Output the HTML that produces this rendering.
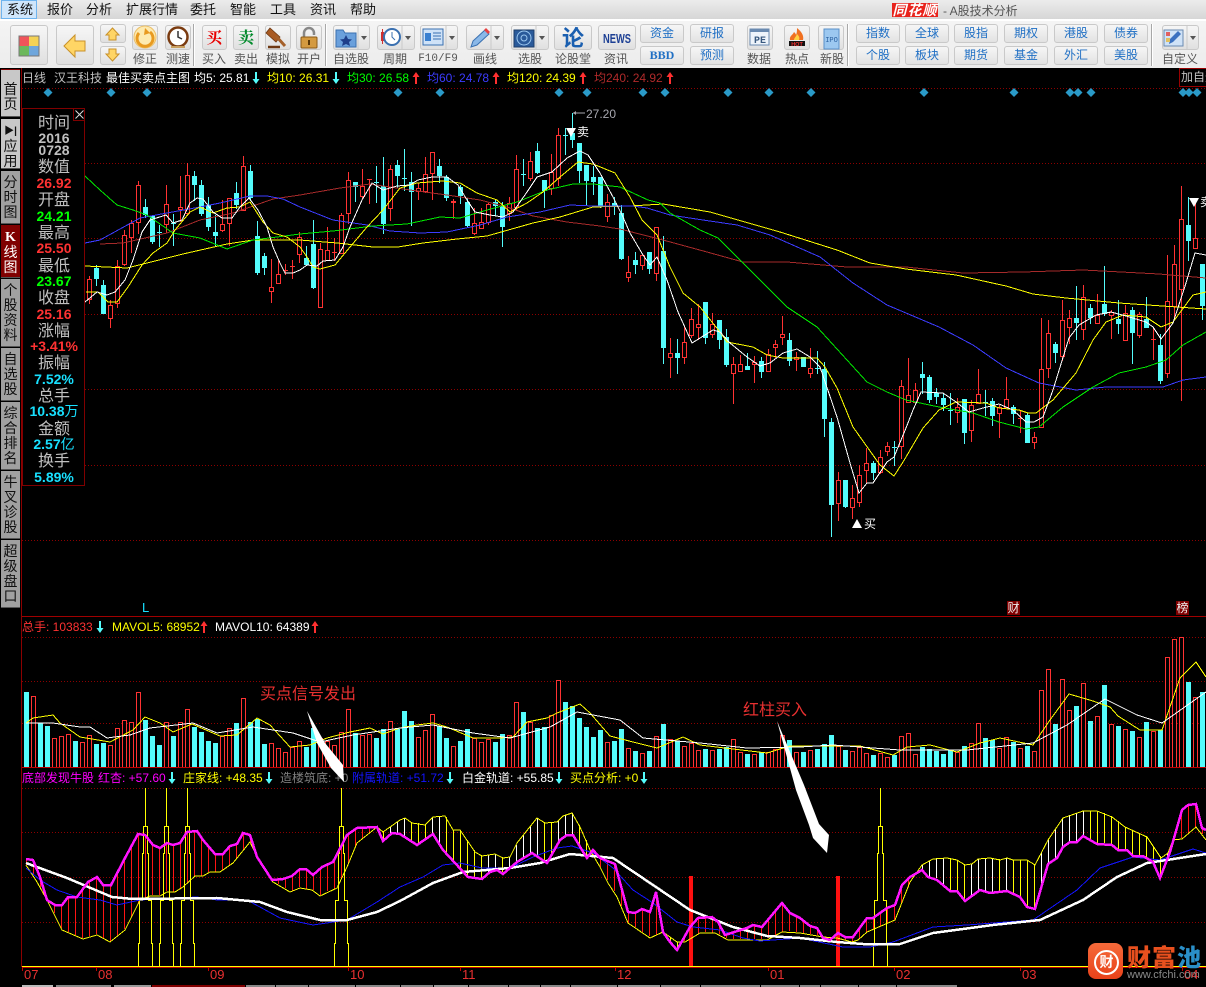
<!DOCTYPE html>
<html lang="zh"><head><meta charset="utf-8"><title>同花顺</title>
<style>
html,body{margin:0;padding:0;background:#000;}
#r{position:relative;width:1206px;height:987px;overflow:hidden;background:#000;font-family:"Liberation Sans","WenQuanYi Zen Hei","Noto Sans CJK SC",sans-serif;font-size:12px;}
#r div,#r span{position:absolute;white-space:nowrap;}
svg{position:absolute;left:0;top:0;}
#menu{left:0;top:0;width:1206px;height:19px;background:linear-gradient(#ececec,#d6d6d6);}
#line{left:0;top:19px;width:1206px;height:2px;background:#fff;}
#tb{left:0;top:21px;width:1206px;height:47px;background:linear-gradient(#f4f4f4,#ececec);}
.m{top:3px;font-size:13px;color:#111;line-height:14px;}
.b{background:linear-gradient(#f6f6f6,#e0e0e0);border:1px solid #c9c9c9;border-radius:3px;box-sizing:border-box;}
.l{top:52px;width:60px;text-align:center;color:#555;font-size:12px;line-height:14px;}
.g{width:44px;height:19px;background:linear-gradient(#f6f6f6,#e2e2e2);border:1px solid #c9c9c9;border-radius:3px;box-sizing:border-box;text-align:center;color:#1f6fc4;font-size:12px;line-height:17px;}
.s{top:24px;height:42px;width:1px;background:#a8a8a8;border-right:1px solid #fff;}
.t{line-height:14px;font-size:12px;}
.tab{left:1px;width:19px;background:#a0a0a0;color:#111;font-size:14px;line-height:15px;text-align:center;white-space:normal!important;border-bottom:1px solid #555;}
.p{left:24px;width:60px;text-align:center;line-height:16px;}
.a{font-size:16px;color:#c0c0c0;margin-top:2px;}
.n{font-size:14px;font-weight:bold;}
.d{top:968px;color:#e83030;font-size:13px;line-height:14px;}
</style></head><body><div id="r">
<svg id="chart" width="1206" height="987" shape-rendering="crispEdges"></svg>

<div id="menu"></div>
<div style="left:1px;top:0;width:36px;height:19px;background:#cfe6fb;border:1px solid #6fb4ee;box-sizing:border-box"></div>
<span class="m" style="left:7px">系统</span><span class="m" style="left:47px">报价</span><span class="m" style="left:86px">分析</span><span class="m" style="left:126px">扩展行情</span><span class="m" style="left:190px">委托</span><span class="m" style="left:230px">智能</span><span class="m" style="left:270px">工具</span><span class="m" style="left:310px">资讯</span><span class="m" style="left:350px">帮助</span>
<div style="left:892px;top:3px;width:46px;height:14px;background:#e8231c;color:#fff;font-weight:bold;font-style:italic;font-size:14px;line-height:14px;text-align:center;letter-spacing:1px">同花顺</div>
<span style="left:943px;top:4px;color:#555;font-size:12px;line-height:14px">- A股技术分析</span>
<div id="line"></div><div id="tb"></div>

<div class="b" style="left:10px;top:25px;width:38px;height:40px"></div>
<div class="b" style="left:56px;top:25px;width:38px;height:40px"></div>
<div class="b" style="left:100px;top:24px;width:26px;height:19px"></div>
<div class="b" style="left:100px;top:46px;width:26px;height:19px"></div>
<div class="b" style="left:132px;top:25px;width:26px;height:25px"></div>
<div class="b" style="left:165px;top:25px;width:26px;height:25px"></div>
<div class="s" style="left:193px"></div>
<div class="b" style="left:202px;top:25px;width:25px;height:25px"></div>
<div class="b" style="left:233px;top:25px;width:26px;height:25px"></div>
<div class="b" style="left:265px;top:25px;width:26px;height:25px"></div>
<div class="b" style="left:296px;top:25px;width:26px;height:25px"></div>
<div class="s" style="left:325px"></div>
<div class="b" style="left:333px;top:25px;width:37px;height:25px"></div>
<div class="b" style="left:377px;top:25px;width:38px;height:25px"></div>
<div class="b" style="left:420px;top:25px;width:38px;height:25px"></div>
<div class="b" style="left:466px;top:25px;width:38px;height:25px"></div>
<div class="b" style="left:511px;top:25px;width:38px;height:25px"></div>
<div class="b" style="left:554px;top:25px;width:38px;height:25px"></div>
<div class="b" style="left:598px;top:25px;width:38px;height:25px"></div>
<div class="b" style="left:747px;top:25px;width:26px;height:25px"></div>
<div class="b" style="left:784px;top:25px;width:26px;height:25px"></div>
<div class="b" style="left:818px;top:25px;width:26px;height:25px"></div>
<div class="s" style="left:847px"></div><div class="s" style="left:1151px"></div>
<div class="b" style="left:1162px;top:25px;width:37px;height:25px"></div>

<span class="l" style="left:115px">修正</span><span class="l" style="left:148px">测速</span><span class="l" style="left:184px">买入</span><span class="l" style="left:216px">卖出</span><span class="l" style="left:248px">模拟</span><span class="l" style="left:279px">开户</span><span class="l" style="left:321px">自选股</span><span class="l" style="left:365px">周期</span>
<span class="l" style="left:408px;font-family:'Liberation Mono',monospace;font-size:11px">F10/F9</span><span class="l" style="left:455px">画线</span><span class="l" style="left:500px">选股</span><span class="l" style="left:543px">论股堂</span><span class="l" style="left:586px">资讯</span><span class="l" style="left:729px">数据</span><span class="l" style="left:767px">热点</span><span class="l" style="left:802px">新股</span><span class="l" style="left:1150px">自定义</span>

<div class="g" style="left:640px;top:24px">资金</div><div class="g" style="left:640px;top:46px;font-weight:bold;font-family:'Liberation Serif',serif">BBD</div>
<div class="g" style="left:690px;top:24px">研报</div><div class="g" style="left:690px;top:46px">预测</div>
<div class="g" style="left:856px;top:24px">指数</div><div class="g" style="left:856px;top:46px">个股</div>
<div class="g" style="left:905px;top:24px">全球</div><div class="g" style="left:905px;top:46px">板块</div>
<div class="g" style="left:954px;top:24px">股指</div><div class="g" style="left:954px;top:46px">期货</div>
<div class="g" style="left:1004px;top:24px">期权</div><div class="g" style="left:1004px;top:46px">基金</div>
<div class="g" style="left:1054px;top:24px">港股</div><div class="g" style="left:1054px;top:46px">外汇</div>
<div class="g" style="left:1104px;top:24px">债券</div><div class="g" style="left:1104px;top:46px">美股</div>

<svg width="1206" height="68" style="pointer-events:none">
<rect x="19" y="36" width="10" height="10" fill="#f0545a"/><rect x="29" y="36" width="10" height="10" fill="#f4d255"/><rect x="19" y="46" width="10" height="10" fill="#6cb85c"/><rect x="29" y="46" width="10" height="10" fill="#6ea6dc"/><rect x="19" y="36" width="20" height="20" fill="none" stroke="#777"/>
<polygon points="64,46 75,35 75,41 85,41 85,51 75,51 75,57" fill="#ffd565" stroke="#c8912a"/>
<polygon points="112.5,28 119,35 116,35 116,40 109,40 109,35 106,35" fill="#ffd565" stroke="#c8912a"/>
<polygon points="112.5,61 119,54 116,54 116,49 109,49 109,54 106,54" fill="#ffd565" stroke="#c8912a"/>
<circle cx="145" cy="37" r="11" fill="#fdeab0" stroke="#ecc068"/><path d="M139 33a8 8 0 1 0 11-1" fill="none" stroke="#e89a20" stroke-width="3"/><path d="M145 28l5 5-6 2z" fill="#e89a20"/>
<circle cx="178" cy="37" r="9.5" fill="#fff" stroke="#7a3b10" stroke-width="2.5"/><path d="M178 31v6l4 2" fill="none" stroke="#333" stroke-width="1.5"/><path d="M171 47h14" stroke="#c9a060" stroke-width="2"/>
<text x="214" y="43" font-size="16" font-weight="bold" fill="#e80000" text-anchor="middle" font-family="'Noto Serif CJK SC',serif">买</text>
<text x="246" y="43" font-size="16" font-weight="bold" fill="#008a2a" text-anchor="middle" font-family="'Noto Serif CJK SC',serif">卖</text>
<path d="M270 28l10 9-4 5-10-9z" fill="#a85a22" stroke="#6e3812" stroke-width=".8"/><path d="M276 36l9 10" stroke="#a4602a" stroke-width="3"/><path d="M268 47h12" stroke="#6e3812" stroke-width="2.5"/>
<path d="M304 38v-5a5 5 0 0 1 10 0v2" fill="none" stroke="#888" stroke-width="2.5"/><rect x="301" y="37" width="16" height="11" rx="1" fill="#d49a40" stroke="#8a5a18"/><rect x="308" y="40" width="2" height="5" fill="#5a3808"/>
<path d="M336 30h7l2 3h11v14h-20z" fill="#6aa0dc" stroke="#3a70b0"/><polygon points="346,35 348,39 352,39.500 349,42 350,46 346,44 342,46 343,42 340,39.500 344,39" fill="#1f3f8a"/>
<path d="M358 26v23M402 26v23M446 26v23M491 26v23M536 26v23M1187 26v23" stroke="#c9c9c9"/>
<g fill="#555"><polygon points="361,36 367,36 364,40"/><polygon points="405,36 411,36 408,40"/><polygon points="449,36 455,36 452,40"/><polygon points="494,36 500,36 497,40"/><polygon points="539,36 545,36 542,40"/><polygon points="1190,36 1196,36 1193,40"/></g>
<rect x="381" y="32" width="3" height="9" fill="#d03030"/><path d="M382.500 29v15" stroke="#d03030"/><circle cx="392" cy="37" r="8" fill="#fff" stroke="#3a70b0" stroke-width="2"/><path d="M392 32v5l3 3" fill="none" stroke="#3a70b0"/>
<rect x="423" y="29" width="20" height="16" fill="#cfe2f7" stroke="#3a70b0"/><rect x="425" y="33" width="6" height="8" fill="#3a80d0"/><path d="M433 33h8M433 36h8M433 39h8" stroke="#3a70b0"/>
<path d="M471 47l2-6 12-11 4 4-12 11z" fill="#8ab8e8" stroke="#3a70b0"/><path d="M484 30l4 4 2-2-4-4z" fill="#e84040"/>
<rect x="514" y="30" width="20" height="17" fill="#2a5a9a" stroke="#1f3f6a"/><circle cx="524" cy="38" r="7" fill="none" stroke="#9cc8f0"/><circle cx="524" cy="38" r="3" fill="none" stroke="#9cc8f0"/>
<text x="573" y="46" font-size="22" font-weight="bold" fill="#1a5fb0" text-anchor="middle" font-family="'Noto Sans CJK SC',sans-serif">论</text>
<text x="617" y="43" font-size="13" font-weight="bold" fill="#1c3f94" text-anchor="middle" textLength="28" lengthAdjust="spacingAndGlyphs">NEWS</text>
<path d="M750 29h19v16h-19z" fill="#eef4fb" stroke="#6a8ab0"/><path d="M750 29h19v3h-19z" fill="#6a8ab0"/><text x="760" y="43" font-size="10" font-weight="bold" fill="#3a5a80" text-anchor="middle" font-family="'Liberation Mono',monospace">PE</text>
<path d="M797 28c5 4 7 8 6 12h-13c-1-4 3-5 4-8 1 1 2 2 2 3 1-2 1-5 1-7z" fill="#f07020"/><path d="M797 34c2 2 3 4 2 6h-5c0-2 2-3 3-6z" fill="#ffd040"/><rect x="789" y="41" width="16" height="5" fill="#111"/><text x="797" y="46" font-size="5.500" font-weight="bold" fill="#f03030" text-anchor="middle">HOT</text>
<rect x="824" y="29" width="15" height="20" fill="#9cc8f0" stroke="#5a90c8"/><text x="831.500" y="42" font-size="7" fill="#2a60a0" text-anchor="middle" font-family="'Liberation Mono',monospace">IPO</text>
<rect x="1164" y="30" width="19" height="16" fill="#cfe2f7" stroke="#6a8ab0"/><path d="M1169 44l1-5 8-8 3 3-8 8z" fill="#3a70c0"/><rect x="1166" y="32" width="4" height="4" fill="#e06060"/><rect x="1166" y="38" width="4" height="4" fill="#e0c060"/>
</svg>

<!-- side tabs -->
<div class="tab" style="top:69px;height:48px;background:#c8c8c8;border-top:1px solid #800000;padding-top:12px;box-sizing:border-box">首<br>页</div>
<div class="tab" style="top:119px;height:50px;background:#c8c8c8;padding-top:3px;box-sizing:border-box"><b style="font-size:10px">▶|</b><br>应<br>用</div>
<div class="tab" style="top:171px;height:53px;padding-top:4px;box-sizing:border-box">分<br>时<br>图</div>
<div class="tab" style="top:225px;height:53px;background:#800000;color:#fff;padding-top:4px;box-sizing:border-box"><b style="font-family:'Liberation Serif',serif">K</b><br>线<br>图</div>
<div class="tab" style="top:279px;height:68px;padding-top:4px;box-sizing:border-box">个<br>股<br>资<br>料</div>
<div class="tab" style="top:348px;height:53px;padding-top:4px;box-sizing:border-box">自<br>选<br>股</div>
<div class="tab" style="top:402px;height:68px;padding-top:4px;box-sizing:border-box">综<br>合<br>排<br>名</div>
<div class="tab" style="top:471px;height:68px;padding-top:4px;box-sizing:border-box">牛<br>叉<br>诊<br>股</div>
<div class="tab" style="top:540px;height:68px;padding-top:4px;box-sizing:border-box">超<br>级<br>盘<br>口</div>

<!-- legend -->
<span class="t" style="left:22px;top:71px;color:#c0c0c0">日线</span><span class="t" style="left:54px;top:71px;color:#c0c0c0">汉王科技</span><span class="t" style="left:106px;top:71px;color:#fff">最佳买卖点主图</span>
<span class="t" style="left:194px;top:71px;color:#fff">均5: 25.81</span><span class="t" style="left:267px;top:71px;color:#ff0">均10: 26.31</span><span class="t" style="left:347px;top:71px;color:#0f0">均30: 26.58</span><span class="t" style="left:427px;top:71px;color:#3c3cff">均60: 24.78</span><span class="t" style="left:507px;top:71px;color:#ff0">均120: 24.39</span><span class="t" style="left:594px;top:71px;color:#b02a2a">均240: 24.92</span>
<div style="left:1179px;top:68px;width:27px;height:19px;border:1px solid #900;border-right:0;box-sizing:border-box;color:#c0c0c0;font-size:12px;line-height:17px;overflow:hidden;padding-left:1px">加自选</div>

<!-- info panel -->
<div style="left:22px;top:108px;width:63px;height:378px;border:1px solid #800000;box-sizing:border-box;background:#000;outline:0"></div>
<div style="left:73px;top:108px;width:12px;height:13px;border:1px solid #800000;box-sizing:border-box"></div>
<span class="p a" style="top:114px">时间</span><span class="p n" style="top:130px;color:#c0c0c0">2016</span><span class="p n" style="top:142px;color:#c0c0c0">0728</span>
<span class="p a" style="top:158px">数值</span><span class="p n" style="top:175px;color:#ff3232">26.92</span>
<span class="p a" style="top:191px">开盘</span><span class="p n" style="top:208px;color:#0f0">24.21</span>
<span class="p a" style="top:224px">最高</span><span class="p n" style="top:240px;color:#ff3232">25.50</span>
<span class="p a" style="top:257px">最低</span><span class="p n" style="top:273px;color:#0f0">23.67</span>
<span class="p a" style="top:289px">收盘</span><span class="p n" style="top:306px;color:#ff3232">25.16</span>
<span class="p a" style="top:322px">涨幅</span><span class="p n" style="top:338px;color:#ff3232">+3.41%</span>
<span class="p a" style="top:354px">振幅</span><span class="p n" style="top:371px;color:#18e0ff">7.52%</span>
<span class="p a" style="top:387px">总手</span><span class="p n" style="top:403px;color:#18e0ff">10.38<span style="position:static;font-weight:normal">万</span></span>
<span class="p a" style="top:420px">金额</span><span class="p n" style="top:436px;color:#18e0ff">2.57<span style="position:static;font-weight:normal">亿</span></span>
<span class="p a" style="top:452px">换手</span><span class="p n" style="top:469px;color:#18e0ff">5.89%</span>

<!-- chart labels -->
<span class="t" style="left:586px;top:107px;color:#a8a8b0">27.20</span>
<span class="t" style="left:577px;top:125px;color:#fff">卖</span>
<span class="t" style="left:864px;top:517px;color:#fff">买</span>
<span class="t" style="left:1200px;top:195px;color:#fff">卖</span>
<span class="t" style="left:142px;top:601px;color:#18e0ff;font-size:13px">L</span>
<span class="t" style="left:1007px;top:601px;width:13px;background:#800000;color:#eee;text-align:center">财</span>
<span class="t" style="left:1176px;top:601px;width:13px;background:#800000;color:#eee;text-align:center">榜</span>

<!-- vol legend -->
<span class="t" style="left:22px;top:620px;color:#ff3232">总手: 103833</span><span class="t" style="left:112px;top:620px;color:#ff0">MAVOL5: 68952</span><span class="t" style="left:215px;top:620px;color:#fff">MAVOL10: 64389</span>
<span class="t" style="left:260px;top:686px;color:#e83030;font-size:16px;line-height:18px">买点信号发出</span>
<span class="t" style="left:743px;top:702px;color:#e83030;font-size:16px;line-height:18px">红柱买入</span>

<!-- indicator legend -->
<span class="t" style="left:22px;top:771px;color:#f0f">底部发现牛股</span><span class="t" style="left:98px;top:771px;color:#f0f">红杏: +57.60</span><span class="t" style="left:183px;top:771px;color:#ff0">庄家线: +48.35</span><span class="t" style="left:280px;top:771px;color:#808080">造楼筑底: +0</span><span class="t" style="left:352px;top:771px;color:#1414ff">附属轨道: +51.72</span><span class="t" style="left:462px;top:771px;color:#fff">白金轨道: +55.85</span><span class="t" style="left:570px;top:771px;color:#ff0">买点分析: +0</span>

<svg id="over" width="1206" height="987" style="pointer-events:none"></svg>

<span class="d" style="left:24px">07</span><span class="d" style="left:98px">08</span><span class="d" style="left:210px">09</span><span class="d" style="left:350px">10</span><span class="d" style="left:462px">11</span><span class="d" style="left:617px">12</span><span class="d" style="left:770px">01</span><span class="d" style="left:896px">02</span><span class="d" style="left:1022px">03</span><span class="d" style="left:1184px">04</span>

<!-- watermark -->
<div style="left:1088px;top:943px;width:35px;height:36px;background:linear-gradient(#f56a3a,#e8421a);border-radius:8px"></div>
<div style="left:1093px;top:948px;width:21px;height:21px;border:2.500px solid #fff;border-radius:50%;color:#fff;font-weight:bold;font-size:14px;line-height:21px;text-align:center;margin-left:1px;margin-top:2px">财</div>
<span style="left:1127px;top:941px;font-family:'Noto Sans CJK SC',sans-serif;font-weight:900;font-size:24px;line-height:30px;color:#e8501e;letter-spacing:1px">财富<span style="position:static;color:#2a8fc8">池</span></span>
<span style="left:1127px;top:969px;color:#8a8a8a;font-size:11px;line-height:13px">www.cfchi.com</span>
</div>
<script>
(function(){
var C='#54fcfc',R='#ff3232',s='';
function rect(x,y,w,h,f){return '<rect x="'+x+'" y="'+y+'" width="'+w+'" height="'+h+'" fill="'+f+'"/>';}
function line(x1,y1,x2,y2,c,extra){return '<line x1="'+x1+'" y1="'+y1+'" x2="'+x2+'" y2="'+y2+'" stroke="'+c+'" '+(extra||'')+'/>';}
function poly(p,c,w){return '<polyline points="'+p+'" fill="none" stroke="'+c+'" stroke-width="'+(w||1)+'"/>';}
[88,163,238,314,389,465,540,637,681,723,788,832,877,922].forEach(function(y){s+=line(22,y+.5,1206,y+.5,'#8c0000','stroke-dasharray="1 2"');});
/* frame */
s+=rect(21,68,1,899,'#8c0000')+rect(22,616,1184,1,'#a00000')+rect(22,767,1184,1,'#c00000')+rect(22,967,1184,1,'#c00000');
/* candles from x=89 */
var cd="r279 299 276 303;c268 278 265 285;c285 313 280 313;r305 318 300 327;r266 303 260 307;r235 264 230 265;r223 237 220 252;r185 222 181 233;c207 214 199 217;c216 241 215 243;c232 232 225 246;r204 224 185 232;c223 223 214 245;r207 209 176 221;r175 213 163 215;c176 184 171 200;c185 213 180 215;c205 226 197 230;c232 235 215 245;r224 230 200 231;r198 223 198 245;c193 204 182 208;r166 210 156 210;c171 197 165 200;c236 272 221 274;c256 267 253 274;r287 291 259 302;r274 283 260 283;r270 270 264 274;r266 266 260 278;r237 254 232 262;c258 264 246 264;c244 287 220 288;r249 307 243 307;r250 260 227 260;r252 252 238 260;r215 253 213 253;r180 213 172 223;c182 186 182 201;r186 196 169 198;r179 179 179 203;c182 182 166 202;c186 223 157 233;r169 208 165 220;c165 175 160 187;c178 178 149 190;c182 191 172 225;r188 191 183 199;r174 191 157 192;r152 173 152 199;c166 175 159 182;c177 197 175 200;r201 202 199 218;c187 195 185 203;c202 225 198 226;r223 233 208 234;r222 228 208 228;r204 222 203 224;c202 205 200 215;c205 226 202 246;r203 213 197 220;r169 207 155 210;c174 174 159 185;r161 178 152 180;c151 172 143 173;c180 190 180 207;r172 188 154 194;r135 178 128 185;c135 135 128 154;c133 139 113 147;c143 170 143 182;c165 180 165 205;c177 181 166 194;c177 205 177 207;r202 216 194 221;c203 205 197 214;c213 258 205 259;r272 277 256 281;c260 264 252 273;r255 265 254 269;c252 268 252 273;r227 273 227 280;c251 347 236 363;r353 357 338 377;c353 357 339 373;r342 357 327 363;r319 335 308 337;r324 327 304 339;c302 337 302 343;r324 334 313 337;c320 339 320 348;c337 364 329 366;r364 373 357 403;r364 371 355 371;c366 369 353 369;r362 364 356 382;c361 371 357 377;r354 371 349 371;r344 347 340 357;r334 337 316 344;c340 360 333 365;r357 359 352 370;c357 366 357 366;r368 373 348 377;c368 368 351 373;c369 418 362 436;c422 504 418 536;r480 503 472 520;c480 506 480 507;r498 507 485 518;r475 502 465 506;r463 470 448 482;c463 472 461 479;r457 472 450 473;r446 451 442 455;c447 447 441 465;r386 446 380 458;r395 402 358 402;r390 402 383 402;c374 377 362 393;c377 399 375 402;c393 396 388 403;c398 404 393 410;c410 410 393 424;r407 412 398 422;c399 432 399 443;r405 430 400 441;r394 403 369 403;c402 402 390 415;c401 415 398 425;r407 413 405 437;r399 407 377 407;c407 413 405 423;r418 418 410 432;c415 442 413 442;r437 442 432 448;r369 427 318 427;r333 368 320 377;c344 352 342 362;r320 356 300 360;r318 327 310 343;c318 322 286 339;r297 329 285 339;c308 317 304 323;r315 323 294 323;c304 313 266 315;r312 315 310 338;c319 323 300 333;r313 340 305 340;c310 332 307 363;r314 335 312 337;c319 327 297 327;r339 339 327 359;c345 380 334 383;r301 373 255 377;r264 306 245 317;r219 289 186 400;c225 240 197 260;r238 248 200 248;c264 305 264 319".split(';');
cd.forEach(function(e,i){var x=89+7*i,t=e[0],a=e.slice(1).split(' ').map(Number),top=a[0],b=a[1],h=a[2],l=a[3],col=t=='r'?R:C;
 s+=rect(x,h,1,l-h+1,col);
 if(top==b){s+=rect(x-2,top,5,1,col);}
 else if(t=='c'){s+=rect(x-2,top,5,b-top+1,col);}
 else{s+=rect(x-2,top,5,b-top+1,R)+rect(x-1,top+1,3,b-top-1,'#000');}
});
/* volume */
var v="c692 r696 c723 c726 r738 r736 r734 c741 r742 r735 c744 c743 r745 r728 r720 r722 r692 c720 c736 c745 r722 c736 r722 r709 c727 c732 c741 c743 r736 r728 c723 r698 c722 c719 c744 r743 r748 r752 r747 r741 c747 c728 r738 r741 r745 r732 r709 c733 r735 r734 c738 c729 r721 c729 c711 c721 r737 r730 r714 c726 c738 r746 c741 c729 r738 r742 r739 c742 c734 r735 r702 c712 r722 c728 c727 r715 r680 c702 c706 c718 c727 c737 c730 r742 c741 c729 r748 c751 r753 c751 r736 c724 r739 c741 r746 r743 r750 c749 r750 c749 c747 r739 r752 c754 r754 c752 r752 r749 r735 c740 r752 c752 r750 c749 c744 c735 r746 c750 r751 r747 r753 c755 r753 r757 c755 r736 r733 r754 c747 c749 c751 c754 c750 r752 c746 r743 r723 c738 c740 r748 r737 c742 r748 c746 r751 r690 r669 c724 r679 r710 c706 r683 c721 r716 c685 r724 c726 r729 c731 r737 c722 r731 c730 r657 r639 r637 c682 r697 c692".split(' ');
v.forEach(function(e,i){var x=26+7*i,t=e[0],y=+e.slice(1);
 if(t=='c')s+=rect(x-2,y,5,767-y,C);
 else s+=rect(x-2,y,5,767-y,R)+rect(x-1,y+1,3,766-y,'#000');
});
/* main MAs */
var ma5="85,302 97,292 107,295 115,292 125,280 133,260 142,232 150,220 166,215 173,223 182,220 190,203 197,198 203,199 213,212 222,218 232,218 240,207 249,198 258,210 267,227 273,247 280,263 285,273 293,273 300,270 307,265 317,266 323,261 335,260 343,247 350,227 362,200 372,183 383,190 397,186 410,185 418,180 432,177 447,177 458,185 467,200 475,212 490,215 503,217 513,212 527,192 537,177 552,172 567,158 580,151 588,155 600,173 613,197 623,217 630,233 643,255 650,265 657,257 667,280 678,312 692,343 713,330 720,332 730,343 747,357 760,366 770,363 783,353 797,349 810,357 820,367 837,417 850,463 859,493 867,483 873,483 887,462 894,457 906,428 913,410 921,392 943,393 956,402 969,412 983,408 999,404 1013,410 1026,422 1034,422 1043,417 1053,390 1069,338 1079,325 1096,315 1111,312 1126,316 1146,322 1153,327 1161,339 1173,323 1186,283 1195,253 1206,255";
var ma10="86,292 98,292 108,302 117,302 128,287 142,265 153,253 167,243 175,230 190,212 200,207 213,213 227,208 240,207 250,202 263,222 273,233 287,237 300,247 307,257 313,267 320,269 335,265 350,247 367,227 383,210 400,188 417,183 443,181 460,183 477,193 497,200 510,212 527,203 543,192 560,177 578,162 593,164 615,173 630,197 642,220 657,235 670,267 683,293 700,307 720,332 727,342 753,347 767,355 783,358 817,358 825,367 837,388 853,427 880,465 894,476 903,462 906,457 923,428 939,410 956,402 986,403 999,408 1019,410 1028,413 1036,413 1053,400 1076,373 1093,340 1106,322 1123,315 1146,317 1161,327 1173,322 1193,295 1206,292";
var ma30="85,176 100,190 117,205 133,210 147,215 173,233 200,238 227,249 253,240 277,237 300,234 333,231 373,226 407,224 440,217 460,218 487,210 517,202 547,190 573,184 593,184 620,187 648,200 660,203 670,213 700,230 718,238 743,263 787,307 817,327 847,360 867,382 887,392 906,400 939,407 973,413 999,422 1026,429 1039,427 1063,407 1093,387 1119,373 1146,367 1166,360 1183,345 1206,332";
var ma60="85,243 100,240 140,218 167,213 200,207 220,203 250,196 267,196 283,199 300,207 333,220 367,225 390,231 420,233 447,232 480,225 507,217 540,212 570,205 593,206 633,206 647,208 670,215 703,220 737,225 770,235 820,257 853,283 887,305 906,313 939,327 973,345 1006,368 1039,383 1076,390 1106,387 1163,387 1183,380 1206,377";
var ma120="85,266 127,268 147,263 183,254 227,244 253,240 300,240 337,243 373,247 398,247 423,243 457,239 487,236 533,223 560,217 593,207 630,206 663,204 710,212 780,232 837,250 870,263 906,269 956,275 1006,286 1033,294 1066,298 1119,303 1206,309";
var ma240="100,244 123,243 167,233 200,220 233,213 273,199 300,195 340,188 370,184 410,190 447,195 480,200 507,207 533,216 567,222 600,226 620,229 663,240 707,252 743,262 787,262 847,267 906,267 963,273 1023,272 1083,270 1159,274 1206,278";
s+=poly(ma240,'#a52a2a')+poly(ma120,'#ffff00')+poly(ma60,'#3c3cff')+poly(ma30,'#00e600')+poly(ma10,'#ffff00')+poly(ma5,'#fff');
/* vol MAs */
s+=poly("26,723 33,718 53,715 60,723 80,737 110,742 133,730 145,717 160,723 173,732 192,724 220,736 237,735 257,718 270,725 290,747 310,745 327,738 350,732 370,728 383,734 400,728 417,725 433,723 447,727 473,738 500,738 513,737 527,722 547,718 557,713 580,704 590,713 610,736 633,742 657,748 683,737 700,745 733,749 767,753 790,746 800,746 833,746 860,746 893,755 907,747 930,745 957,752 980,743 1000,738 1033,745 1050,720 1069,694 1093,701 1110,707 1118,716 1140,730 1162,730 1180,678 1196,662 1206,677",'#ffff00');
s+=poly("26,723 53,723 80,727 90,727 107,738 130,735 150,728 193,723 217,733 253,727 293,733 320,742 353,735 400,728 433,725 473,733 510,738 550,727 577,712 620,720 643,738 700,743 747,748 800,747 833,745 900,750 967,750 1033,743 1067,725 1105,699 1137,715 1162,723 1206,692",'#fff');
/* indicator */
var mg="26,859 33,860 40,877 47,900 55,905 62,905 68,897 77,897 88,882 97,877 103,885 111,885 125,858 138,834 145,835 153,845 160,848 167,843 173,845 180,843 187,832 197,831 203,840 215,854 223,854 230,846 237,844 243,833 250,835 257,857 272,880 283,879 292,876 300,869 306,869 313,875 322,867 333,862 347,835 357,828 377,827 383,841 392,833 400,834 417,845 433,834 443,850 455,863 468,877 482,879 490,872 497,870 503,874 517,862 532,853 547,863 560,840 567,835 573,835 582,850 587,858 593,850 600,858 615,864 628,912 635,913 642,909 650,912 656,892 663,932 670,942 677,950 690,927 698,918 712,917 718,922 725,935 747,928 753,925 762,927 782,903 790,913 800,918 810,926 817,928 823,938 830,940 838,933 845,937 853,937 867,918 873,918 887,908 895,905 902,885 910,877 922,870 928,877 937,880 950,891 957,891 965,901 980,890 990,893 1007,891 1020,897 1027,907 1035,909 1048,864 1057,858 1063,847 1070,842 1077,842 1083,836 1097,844 1112,845 1118,850 1127,850 1133,856 1143,856 1153,862 1160,878 1170,852 1182,810 1188,805 1196,804 1202,828 1206,830";
var yl="26,865 37,882 47,900 62,930 83,939 97,935 110,942 125,930 140,900 150,896 160,896 167,892 175,892 183,887 195,876 203,876 210,872 220,872 233,863 250,842 257,857 273,882 290,892 300,888 312,890 320,896 337,888 347,867 357,843 377,827 383,832 400,820 405,818 412,823 425,825 433,817 445,816 453,830 460,830 475,852 482,856 495,854 503,858 510,857 517,843 537,818 545,823 557,822 563,816 572,813 580,827 590,850 600,867 608,883 617,897 628,923 650,938 663,932 677,942 685,942 700,933 715,933 728,940 767,940 782,932 800,933 823,937 837,938 852,942 858,940 867,932 895,920 910,882 922,865 933,859 947,858 957,860 965,865 972,864 978,859 990,858 1000,860 1007,858 1013,860 1027,860 1035,865 1048,840 1063,818 1083,811 1097,811 1112,817 1125,827 1147,837 1161,858 1168,853 1173,840 1182,839 1196,827 1206,840";
function parse(p){return p.split(' ').map(function(q){return q.split(',').map(Number);});}
function at(a,x){for(var i=1;i<a.length;i++){if(x<=a[i][0]){var k=(x-a[i-1][0])/(a[i][0]-a[i-1][0]);return a[i-1][1]+k*(a[i][1]-a[i-1][1]);}}return a[a.length-1][1];}
var M=parse(mg),Y=parse(yl);
for(var x=26;x<1206;x+=7){var m=at(M,x),y=at(Y,x),py=at(Y,x-7);
 var c=m<y?'#ff1414':(y<py?'#ffffff':'#ffff00');
 s+=rect(x,Math.min(m,y)|0,1,Math.abs(m-y)|0,c);
}
s+=rect(689,876,4,90,'#ff1010')+rect(836,876,4,90,'#ff1010');
[145,166,187,341,880].forEach(function(c){var d=[[-7,943,966],[-6,900,943],[-3,853,900],[-2,826,853],[0,788,826],[2,826,853],[3,853,900],[6,900,943],[7,943,966],[-7,943,943]];
 d.forEach(function(p){s+=rect(c+p[0],p[1],1,p[2]-p[1]+1,'#ffff00');});
 [[-7,-6,943],[-6,-3,900],[-3,-2,853],[-2,0,826],[0,2,826],[2,3,853],[3,6,900],[6,7,943]].forEach(function(h){s+=rect(c+h[0],h[2],h[1]-h[0]+1,1,'#ffff00');});
});
s+=poly(yl,'#ffff00');
s+=poly("26,868 40,880 57,890 77,897 100,900 117,905 140,900 197,897 217,900 247,900 280,918 313,925 347,920 377,902 400,887 423,877 443,865 460,863 482,868 510,868 533,857 557,848 572,846 593,853 613,868 633,890 653,903 677,922 693,927 720,930 743,938 760,941 800,938 843,947 870,947 893,942 933,927 967,925 1033,920 1077,890 1100,868 1133,857 1160,860 1193,849 1206,853",'#1414ff');
s+=poly("26,863 67,878 112,897 133,899 217,898 260,902 287,912 320,920 347,920 377,912 400,901 433,883 463,872 510,868 540,863 570,854 613,858 653,885 690,910 733,927 767,936 800,938 837,942 863,944 900,944 933,933 993,925 1040,920 1083,900 1117,877 1147,863 1206,854",'#fff',2.5);
s+=poly(mg,'#ff14ff',2.5);
s+=rect(22,966,1184,1,'#ffff00');
/* x ticks */
[22,96,208,348,460,615,768,894,1020,1182].forEach(function(x){s+=rect(x,968,1,3,'#c00000');});
/* bottom strip */
[[22,53,'#bbb'],[56,111,'#888'],[114,151,'#999'],[152,245,'#800000'],[246,275,'#888'],[276,308,'#888'],[309,355,'#888'],[356,400,'#888'],[401,433,'#888'],[434,468,'#999'],[469,508,'#888'],[509,540,'#888'],[541,570,'#888'],[571,617,'#888'],[618,660,'#999'],[661,700,'#888'],[701,760,'#888'],[761,799,'#888'],[800,820,'#888'],[821,858,'#888'],[859,896,'#888'],[897,957,'#888']].forEach(function(g){s+=rect(g[0],985,g[1]-g[0],2,g[2]);});
document.getElementById('chart').innerHTML=s;

var o='';
function ar(x,y,up){var c=up?'#ff3030':'#54fcfc';
 o+=up?'<path d="M'+x+' '+y+'l3.500 5h-2.500v7h-2v-7h-2.500z" fill="'+c+'"/>':'<path d="M'+x+' '+(y+12)+'l3.500-5h-2.500v-7h-2v7h-2.500z" fill="'+c+'"/>';}
[[256,72,0],[336,72,0],[416,72,1],[496,72,1],[583,72,1],[670,72,1],[100,621,0],[204,621,1],[315,621,1],[172,772,0],[269,772,0],[450,772,0],[559,772,0],[644,772,0]].forEach(function(a){ar(a[0],a[1],a[2]);});
[48,111,147,398,440,559,587,643,665,728,769,811,924,1014,1070,1078,1091,1183,1189,1197].forEach(function(x){o+='<polygon points="'+x+',88 '+(x+4.5)+',92.500 '+x+',97 '+(x-4.5)+',92.500" fill="#2a9ac8"/>';});
o+='<path d="M75.500 110.500l8 8M83.500 110.500l-8 8" stroke="#ddd" fill="none"/>';
o+='<path d="M573 113h12" stroke="#a8a8b0"/><path d="M573 113l3-2v4z" fill="#a8a8b0"/><path d="M572.500 113v10" stroke="#54fcfc"/>';
o+='<polygon points="566,128 576,128 571,137" fill="#fff"/><polygon points="857,519 862,528 852,528" fill="#fff"/><polygon points="1189,198 1199,198 1194,207" fill="#fff"/>';
o+='<polygon points="307,711 325,743 343,765 344,782 331,768 317,743" fill="#fff"/>';
o+='<polygon points="777,721 804,785 819,824 829,835 827,853 813,838 809,825 796,790" fill="#fff"/>';
document.getElementById('over').innerHTML=o;
})();
</script>
</body></html>
